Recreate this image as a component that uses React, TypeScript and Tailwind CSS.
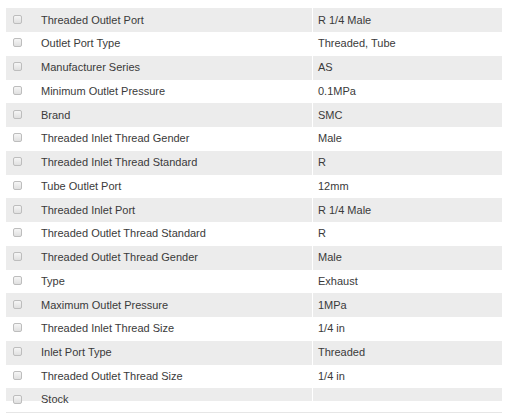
import React from "react";

const rows: [string, string][] = [
  ["Threaded Outlet Port", "R 1/4 Male"],
  ["Outlet Port Type", "Threaded, Tube"],
  ["Manufacturer Series", "AS"],
  ["Minimum Outlet Pressure", "0.1MPa"],
  ["Brand", "SMC"],
  ["Threaded Inlet Thread Gender", "Male"],
  ["Threaded Inlet Thread Standard", "R"],
  ["Tube Outlet Port", "12mm"],
  ["Threaded Inlet Port", "R 1/4 Male"],
  ["Threaded Outlet Thread Standard", "R"],
  ["Threaded Outlet Thread Gender", "Male"],
  ["Type", "Exhaust"],
  ["Maximum Outlet Pressure", "1MPa"],
  ["Threaded Inlet Thread Size", "1/4 in"],
  ["Inlet Port Type", "Threaded"],
  ["Threaded Outlet Thread Size", "1/4 in"],
];

function Box() {
  return (
    <span className="block w-[9px] h-[9px] rounded-[2px] border border-[#bdbdbd] bg-gradient-to-b from-[#f6f6f6] to-[#e0e0e0] shrink-0" />
  );
}

export default function App() {
  return (
    <div
      className="w-[508px] h-[420px] bg-white text-[#3a3a3a] text-[11px] pt-[8px] px-[6px]"
      style={{ fontFamily: '"Liberation Sans", Arial, sans-serif' }}
    >
      <div className="h-[405px] border-b border-[#e6e6e6]">
        {rows.map(([k, v], i) => {
          const gray = i % 2 === 0;
          return (
            <div
              key={k}
              className={`flex ${gray ? "h-[24px]" : "h-[23.5px]"}`}
            >
              <div
                className={`w-[306px] flex items-center pl-[7px] ${gray ? "bg-[#ececec]" : ""}`}
              >
                <span className="-mt-[2px]">
                  <Box />
                </span>
                <span className="ml-[19px] leading-none">{k}</span>
              </div>
              <div className="w-px" />
              <div
                className={`flex-1 flex items-center pl-[5px] ${gray ? "bg-[#ececec]" : ""}`}
              >
                <span className="leading-none">{v}</span>
              </div>
            </div>
          );
        })}
        <div className="flex h-[13px]">
          <div className="w-[306px] bg-[#ececec] relative">
            <div className="absolute left-[7px] top-[6px] flex items-center">
              <span className="-mt-[1px]">
                <Box />
              </span>
              <span className="ml-[19px] leading-none">Stock</span>
            </div>
          </div>
          <div className="w-px" />
          <div className="flex-1 bg-[#ececec]" />
        </div>
      </div>
    </div>
  );
}
